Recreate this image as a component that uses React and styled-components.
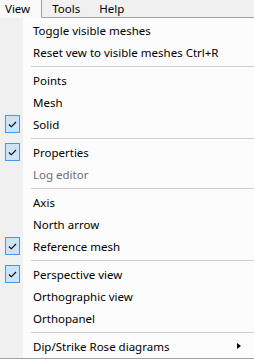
import React from 'react'
import styled, { createGlobalStyle } from 'styled-components'

const GlobalStyle = createGlobalStyle`
    html, body {
        margin: 0;
        padding: 0;
        background: #fcfcfc;
    }
    body {
        font-family: "Noto Sans", "Open Sans", sans-serif;
        font-size: 11.5px;
        color: #000;
    }
`

const Window = styled.div`
    width: 254px;
    height: 359px;
    overflow: hidden;
    display: flex;
    flex-direction: column;
`

const MenuBar = styled.div`
    display: flex;
    height: 18px;
    background: #f0f0f0;
`

const MenuTitle = styled.div`
    display: flex;
    align-items: center;
    height: 17px;
    padding-left: ${p => (p.$open ? '5px' : '10px')};
    padding-right: ${p => (p.$open ? '11px' : '9px')};
    background: ${p => (p.$open ? '#f9f9f9' : '#f0f0f0')};
    border-right: ${p => (p.$open ? '1px solid #a0a0a0' : 'none')};
    border-bottom: 1px solid ${p => (p.$open ? '#f9f9f9' : '#a0a0a0')};
`

const BarFill = styled.div`
    flex: 1;
    border-bottom: 1px solid #a0a0a0;
`

const Menu = styled.div`
    flex: 1;
    padding-top: 1px;
    background: linear-gradient(to right, #f0f0f0 0, #f0f0f0 23px, #fcfcfc 23px);
    border-bottom: 1px solid #a0a0a0;
    box-sizing: border-box;
    display: flex;
    flex-direction: column;
`

const Item = styled.div`
    display: flex;
    align-items: center;
    height: 22px;
    flex-shrink: 0;
    color: ${p => (p.$disabled ? '#6d6d6d' : '#000')};
`

const CheckCell = styled.div`
    width: 33px;
    height: 22px;
    display: flex;
    align-items: center;
    flex-shrink: 0;
`

const CheckBox = styled.div`
    margin-left: 5px;
    width: 15px;
    height: 18px;
    box-sizing: border-box;
    background: #cce4f7;
    border: 1px solid #3c9af0;
    display: flex;
    align-items: center;
    justify-content: center;
`

const Label = styled.span`
    flex: 1;
    white-space: nowrap;
`

const Arrow = styled.span`
    width: 0;
    height: 0;
    margin-right: 13px;
    border-top: 3.5px solid transparent;
    border-bottom: 3.5px solid transparent;
    border-left: 4px solid #000;
`

const Separator = styled.div`
    height: 6px;
    flex-shrink: 0;
    display: flex;
    align-items: center;
    &::after {
        content: '';
        flex: 1;
        margin-left: 31px;
        height: 1px;
        background: #cfcfcf;
    }
`

const Check = () => (
    <svg width="9" height="7" viewBox="0 0 9 7">
        <path d="M1 3.5 L3.3 5.8 L8 1" fill="none" stroke="#000" strokeWidth="1.1" />
    </svg>
)

const groups = [
    [
        { label: 'Toggle visible meshes' },
        { label: 'Reset vew to visible meshes Ctrl+R' },
    ],
    [
        { label: 'Points' },
        { label: 'Mesh' },
        { label: 'Solid', checked: true },
    ],
    [
        { label: 'Properties', checked: true },
        { label: 'Log editor', disabled: true },
    ],
    [
        { label: 'Axis' },
        { label: 'North arrow' },
        { label: 'Reference mesh', checked: true },
    ],
    [
        { label: 'Perspective view', checked: true },
        { label: 'Orthographic view' },
        { label: 'Orthopanel' },
    ],
    [
        { label: 'Dip/Strike Rose diagrams', submenu: true },
    ],
]

export default function App() {
  return (
    <Window>
        <GlobalStyle />
        <MenuBar>
            <MenuTitle $open>View</MenuTitle>
            <MenuTitle>Tools</MenuTitle>
            <MenuTitle>Help</MenuTitle>
            <BarFill />
        </MenuBar>
        <Menu>
            {groups.map((group, gi) => (
                <React.Fragment key={gi}>
                    {gi > 0 && <Separator />}
                    {group.map(item => (
                        <Item key={item.label} $disabled={item.disabled}>
                            <CheckCell>
                                {item.checked && <CheckBox><Check /></CheckBox>}
                            </CheckCell>
                            <Label>{item.label}</Label>
                            {item.submenu && <Arrow />}
                        </Item>
                    ))}
                </React.Fragment>
            ))}
        </Menu>
    </Window>
  )
}
